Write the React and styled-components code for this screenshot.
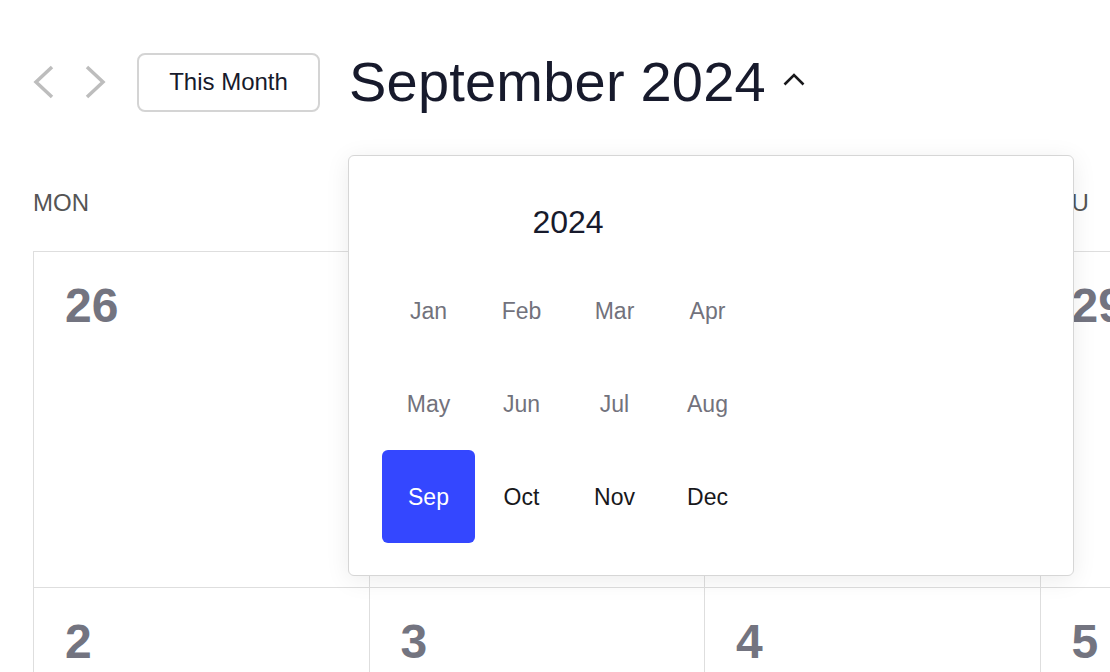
import React from 'react';
import styled, { createGlobalStyle } from 'styled-components';

const GlobalStyle = createGlobalStyle`
  html, body {
    margin: 0;
    padding: 0;
    background: #fff;
    overflow: hidden;
  }
  body {
    font-family: "Liberation Sans", Helvetica, Arial, sans-serif;
  }
`;

const WEEKDAYS = ['MON', 'TUE', 'WED', 'THU', 'FRI', 'SAT', 'SUN'];
const WEEKS = [
  [26, 27, 28, 29, 30, 31, 1],
  [2, 3, 4, 5, 6, 7, 8],
];
const MONTHS = ['Jan', 'Feb', 'Mar', 'Apr', 'May', 'Jun', 'Jul', 'Aug', 'Sep', 'Oct', 'Nov', 'Dec'];
const CURRENT_MONTH = 8;
const COL_WIDTH = '335.5px';

const Page = styled.div`
  width: 1110px;
  height: 672px;
  overflow: hidden;
  padding: 52px 0 0 33px;
  box-sizing: border-box;
`;

const Toolbar = styled.div`
  display: flex;
  align-items: center;
  height: 60px;
`;

const NavGroup = styled.div`
  display: flex;
  align-items: center;
  gap: 31px;
  margin-right: 31px;
`;

const NavButton = styled.button`
  display: flex;
  width: 21px;
  height: 34px;
  padding: 0;
  border: none;
  background: none;
  cursor: pointer;
`;

const TodayButton = styled.button`
  width: 183px;
  height: 59px;
  padding: 0;
  font-family: inherit;
  font-size: 24px;
  color: #171a2c;
  background: #fff;
  border: 2px solid #d4d4d4;
  border-radius: 8px;
  cursor: pointer;
`;

const TitleWrap = styled.div`
  position: relative;
  display: flex;
  align-items: center;
  height: 60px;
  margin-left: 29px;
`;

const Title = styled.h1`
  margin: 0;
  font-size: 56px;
  font-weight: 400;
  line-height: 60px;
  letter-spacing: 0.2px;
  color: #171a2c;
`;

const TitleToggle = styled.span`
  display: flex;
  margin-left: 16px;
  margin-top: -6px;
`;

const Popover = styled.div`
  position: absolute;
  left: -1px;
  top: calc(100% + 43px);
  z-index: 10;
  width: 726px;
  box-sizing: border-box;
  padding: 33px 33px 32px;
  background: #fff;
  border: 1px solid #d6d6d6;
  border-radius: 6px;
  box-shadow: 0 4px 24px rgba(0, 0, 0, 0.08);
`;

const YearLabel = styled.div`
  width: 372px;
  height: 66px;
  margin-bottom: 9px;
  display: flex;
  align-items: center;
  justify-content: center;
  font-size: 32px;
  color: #171a2c;
`;

const MonthGrid = styled.div`
  display: grid;
  grid-template-columns: repeat(4, 93px);
  grid-auto-rows: 93px;
`;

const MonthCell = styled.div`
  display: flex;
  align-items: center;
  justify-content: center;
  padding-top: 2px;
  box-sizing: border-box;
  border-radius: 6px;
  font-size: 23px;
  color: ${({ $state }) => ($state === 'past' ? '#72727c' : $state === 'selected' ? '#fff' : '#18181b')};
  background: ${({ $state }) => ($state === 'selected' ? '#3447ff' : 'transparent')};
`;

const WeekdayRow = styled.div`
  display: grid;
  grid-template-columns: repeat(7, ${COL_WIDTH});
  height: 28px;
  margin: 77px 0 34px;
`;

const Weekday = styled.div`
  font-size: 24px;
  line-height: 28px;
  color: #555;
`;

const DayGrid = styled.div`
  display: grid;
  grid-template-columns: repeat(7, ${COL_WIDTH});
  width: max-content;
  border-top: 1px solid #dedede;
  border-left: 1px solid #dedede;
`;

const DayCell = styled.div`
  height: 336px;
  box-sizing: border-box;
  padding: 30px 0 0 31px;
  border-right: 1px solid #dedede;
  border-bottom: 1px solid #dedede;
`;

const DayNumber = styled.span`
  font-size: 48px;
  font-weight: 700;
  line-height: 1;
  color: #737480;
`;

const Chevron = ({ dir }) => (
  <svg width="21" height="34" viewBox="0 0 21 34" fill="none">
    <polyline
      points={dir === 'left' ? '19,2 3,17 19,32' : '2,2 18,17 2,32'}
      stroke="#bdbdbd"
      strokeWidth="3.5"
    />
  </svg>
);

const ChevronUp = () => (
  <svg width="24" height="14" viewBox="0 0 24 14" fill="none">
    <polyline points="2.5,12.5 12,3 21.5,12.5" stroke="#18181b" strokeWidth="2.6" />
  </svg>
);

function monthState(i) {
  if (i < CURRENT_MONTH) return 'past';
  if (i === CURRENT_MONTH) return 'selected';
  return 'future';
}

export default function App() {
  return (
    <>
      <GlobalStyle />
      <Page>
        <Toolbar>
          <NavGroup>
            <NavButton aria-label="Previous month"><Chevron dir="left" /></NavButton>
            <NavButton aria-label="Next month"><Chevron dir="right" /></NavButton>
          </NavGroup>
          <TodayButton>This Month</TodayButton>
          <TitleWrap>
            <Title>September 2024</Title>
            <TitleToggle><ChevronUp /></TitleToggle>
            <Popover>
              <YearLabel>2024</YearLabel>
              <MonthGrid>
                {MONTHS.map((m, i) => (
                  <MonthCell key={m} $state={monthState(i)}>{m}</MonthCell>
                ))}
              </MonthGrid>
            </Popover>
          </TitleWrap>
        </Toolbar>

        <WeekdayRow>
          {WEEKDAYS.map((d) => <Weekday key={d}>{d}</Weekday>)}
        </WeekdayRow>

        <DayGrid>
          {WEEKS.flat().map((n, i) => (
            <DayCell key={i}>
              <DayNumber>{n}</DayNumber>
            </DayCell>
          ))}
        </DayGrid>
      </Page>
    </>
  );
}
